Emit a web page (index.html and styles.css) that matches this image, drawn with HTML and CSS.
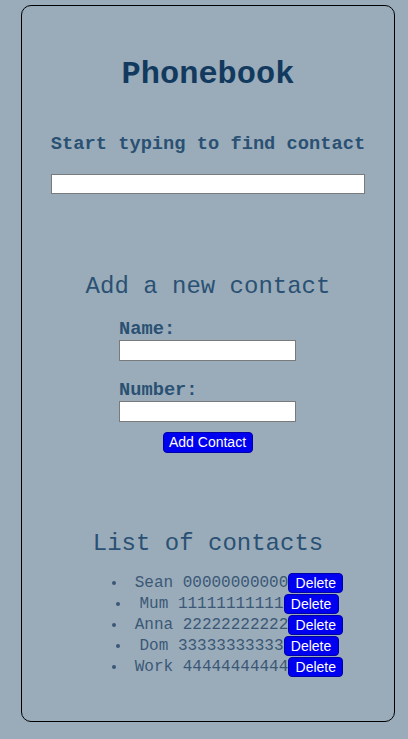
FILE: index.html
```html
<!DOCTYPE html>
<html>
<head>
<meta charset="utf-8">
<link rel="stylesheet" href="styles.css">
</head>
<body>
<div class="card">
  <h1 class="title">Phonebook</h1>
  <h3 class="search-label">Start typing to find contact</h3>
  <input class="search" type="text">
  <h2 class="section">Add a new contact</h2>
  <form class="form">
    <label class="field-label">Name:</label>
    <input class="field" type="text">
    <label class="field-label second">Number:</label>
    <input class="field" type="text">
    <button class="btn add" type="button">Add Contact</button>
  </form>
  <h2 class="section list-title">List of contacts</h2>
  <ul class="contacts">
    <li><span class="entry">Sean 00000000000</span><button class="btn del" type="button">Delete</button></li>
    <li><span class="entry">Mum 11111111111</span><button class="btn del" type="button">Delete</button></li>
    <li><span class="entry">Anna 22222222222</span><button class="btn del" type="button">Delete</button></li>
    <li><span class="entry">Dom 33333333333</span><button class="btn del" type="button">Delete</button></li>
    <li><span class="entry">Work 44444444444</span><button class="btn del" type="button">Delete</button></li>
  </ul>
</div>
</body>
</html>
```
FILE: styles.css
```css
html, body {
  margin: 0;
  padding: 0;
  background: #9aacba;
}
body {
  font-family: "Liberation Mono", "Courier New", monospace;
}
.card {
  box-sizing: border-box;
  width: 374px;
  height: 717px;
  margin: 5px 0 0 21px;
  border: 1px solid #000;
  border-radius: 10px;
  display: flex;
  flex-direction: column;
  align-items: center;
}
.title {
  margin: 50px 0 0;
  font-size: 32px;
  line-height: 37px;
  font-weight: bold;
  color: #123a5e;
}
.search-label {
  margin: 40px 0 0;
  font-size: 18.72px;
  line-height: 22px;
  font-weight: bold;
  color: #2a5173;
}
.search {
  box-sizing: border-box;
  margin: 19px 0 0;
  width: 314px;
  height: 20px;
  border: 1px solid #7a7a7a;
  background: #fff;
  padding: 0;
}
.section {
  margin: 79px 0 0;
  font-size: 24px;
  line-height: 28px;
  font-weight: normal;
  color: #2a5173;
}
.form {
  margin: 17px 1px 0 0;
  width: 177px;
  display: flex;
  flex-direction: column;
  align-items: flex-start;
}
.field-label {
  font-size: 18.72px;
  line-height: 22px;
  font-weight: bold;
  color: #2a5173;
}
.field-label.second {
  margin-top: 18px;
}
.field {
  box-sizing: border-box;
  margin: 0;
  width: 177px;
  height: 21px;
  border: 1px solid #7a7a7a;
  background: #fff;
  padding: 0;
}
.btn {
  font-family: "Liberation Sans", Arial, sans-serif;
  font-size: 14px;
  color: #fff;
  background: #0000f0;
  border: 1px solid #0000a8;
  border-radius: 4px;
  padding: 0;
  cursor: pointer;
}
.add {
  align-self: center;
  margin-top: 10px;
  width: 90px;
  height: 21px;
  line-height: 19px;
}
.list-title {
  margin-top: 77px;
}
.contacts {
  margin: 15px 0 0;
  padding: 0 0 0 40px;
  list-style: disc inside;
  text-align: center;
  font-size: 16px;
  line-height: 21px;
  color: #3a5876;
  align-self: stretch;
}
.contacts li {
  height: 21px;
}
.entry {
  margin-left: 2px;
}
.del {
  width: 55px;
  height: 20px;
  line-height: 18px;
  vertical-align: top;
  margin: 0 1px 0 0;
}
```
